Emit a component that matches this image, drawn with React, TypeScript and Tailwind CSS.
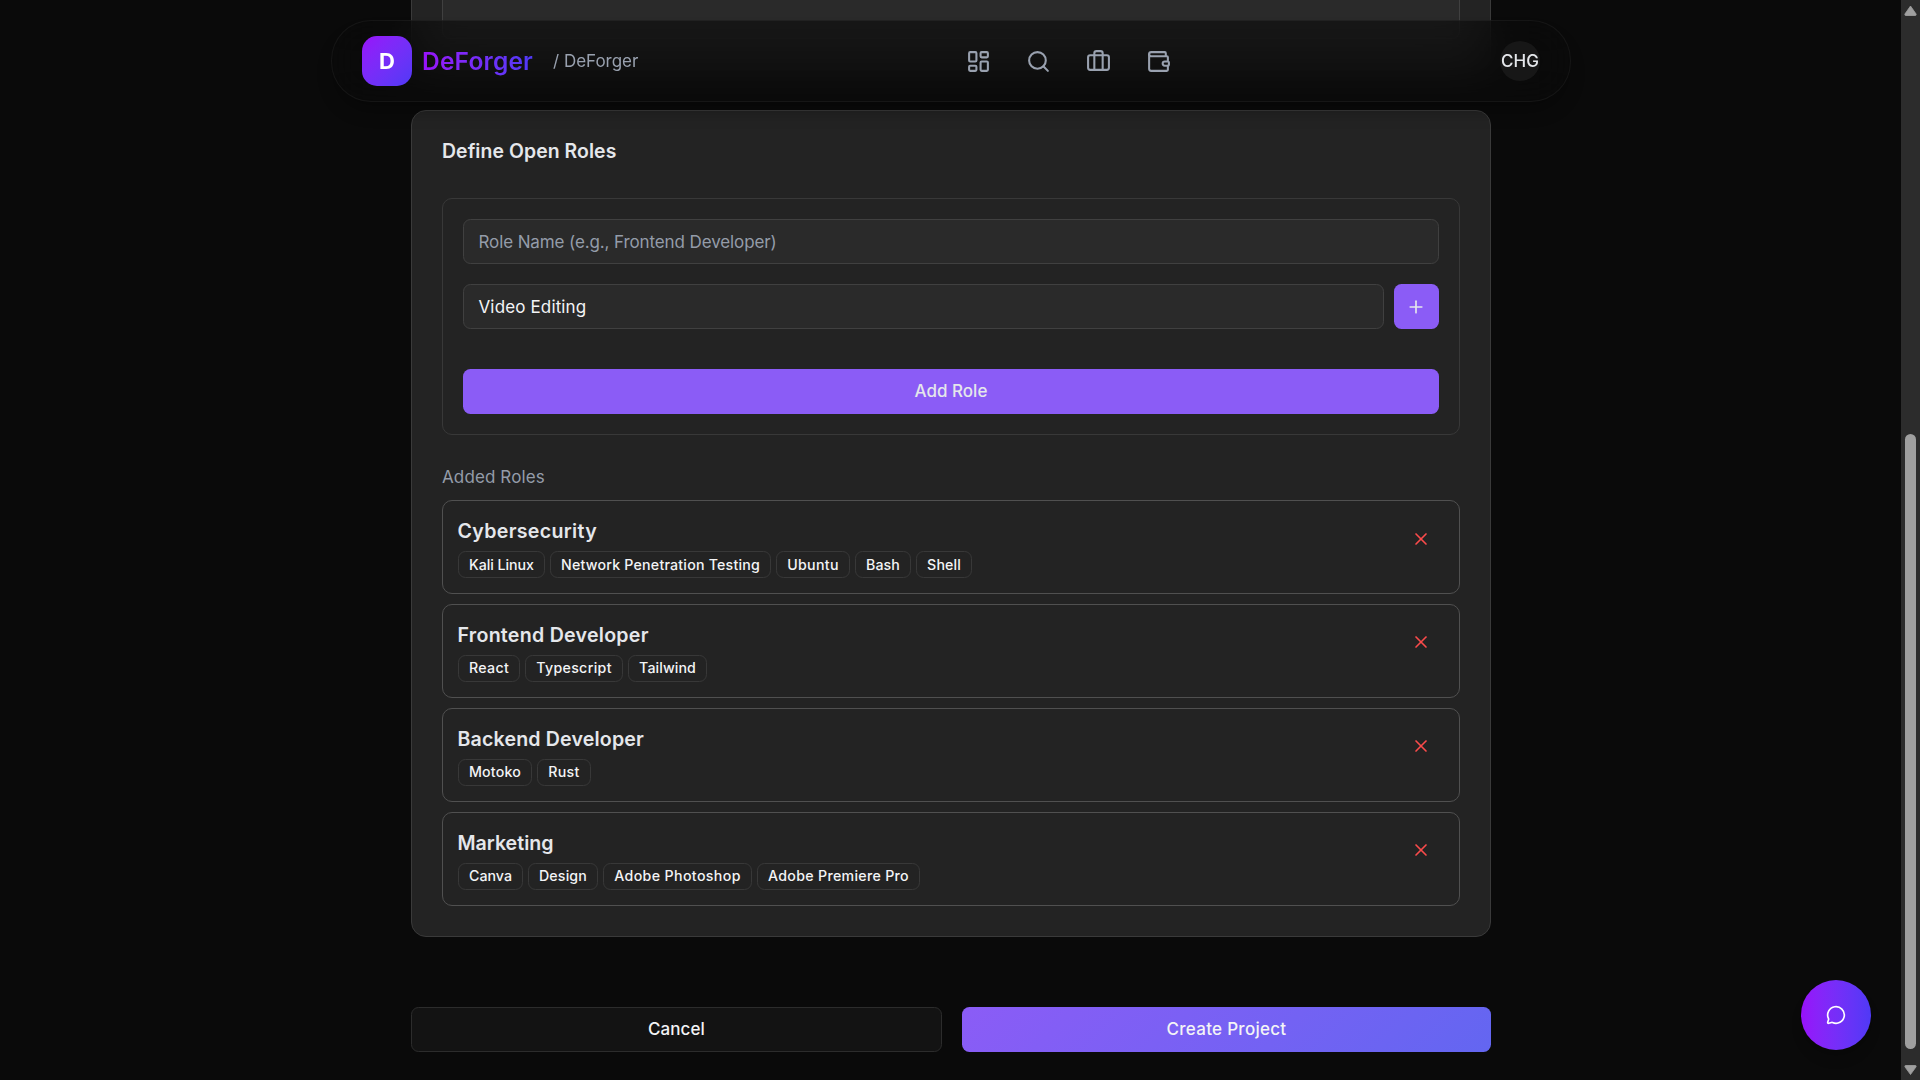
import { Briefcase, LayoutDashboard, MessageCircle, Plus, Search, Wallet, X } from "lucide-react";

type Tag = { label: string; box: string };
type Role = { name: string; tracking: string; nudge: string; tags: Tag[] };

const roles: Role[] = [
  {
    name: "Cybersecurity",
    tracking: "tracking-[0.32px]",
    nudge: "mt-[28px]",
    tags: [
      { label: "Kali Linux", box: "w-[87px] tracking-[-0.05px] pb-0" },
      { label: "Network Penetration Testing", box: "w-[221px] tracking-[0.21px] pb-0" },
      { label: "Ubuntu", box: "w-[74px] tracking-[0.3px] pb-0" },
      { label: "Bash", box: "w-[56px] tracking-[0.12px] pb-0" },
      { label: "Shell", box: "w-[56px] tracking-[0.12px] pb-0" },
    ],
  },
  {
    name: "Frontend Developer",
    tracking: "tracking-[0.26px]",
    nudge: "mt-[27px]",
    tags: [
      { label: "React", box: "w-[62px] tracking-[0.29px] pb-[2px]" },
      { label: "Typescript", box: "w-[98px] tracking-[0.33px] pb-[2px]" },
      { label: "Tailwind", box: "w-[79px] tracking-[0.1px] pb-[2px]" },
    ],
  },
  {
    name: "Backend Developer",
    tracking: "tracking-[0.16px]",
    nudge: "mt-[27px]",
    tags: [
      { label: "Motoko", box: "w-[74px] tracking-[0.18px] pb-[2px]" },
      { label: "Rust", box: "w-[54px] tracking-[0.3px] pb-[2px]" },
    ],
  },
  {
    name: "Marketing",
    tracking: "tracking-[0px]",
    nudge: "mt-[27px]",
    tags: [
      { label: "Canva", box: "w-[65px] tracking-[0.05px] pb-[2px]" },
      { label: "Design", box: "w-[70px] tracking-[0.15px] pb-[2px]" },
      { label: "Adobe Photoshop", box: "w-[149px] tracking-[0.36px] pb-[2px]" },
      { label: "Adobe Premiere Pro", box: "w-[163px] tracking-[0.3px] pb-[2px]" },
    ],
  },
];

function Header() {
  return (
    <header className="absolute left-[331px] top-[20px] z-10 flex h-[82px] w-[1240px] items-center justify-between rounded-[40px] border border-white/5 bg-[#0a0a0a]/60 px-[30px] shadow-[0_12px_18px_-4px_rgba(0,0,0,0.3)] backdrop-blur-[20px]">
      <div className="flex w-[274px] items-center whitespace-nowrap">
        <div className="flex size-[50px] shrink-0 items-center justify-center rounded-[15px] bg-linear-to-br from-[#9810fa] to-[#4f39f6] text-[22px] font-bold text-white">
          D
        </div>
        <span className="ml-[10px] bg-linear-to-r from-[#9810fa] to-[#4f39f6] bg-clip-text pt-px text-[24.5px] font-semibold tracking-[0.2px] text-transparent">
          DeForger
        </span>
        <span className="ml-[20px] pt-[2px] text-[17px] tracking-[-0.02px] text-[#99a1af]">/ DeForger</span>
      </div>
      <nav className="flex items-center gap-[35px] text-[#99a1af]">
        <LayoutDashboard size={25} />
        <Search size={25} />
        <Briefcase size={25} />
        <Wallet size={25} />
      </nav>
      <div className="flex size-[40px] items-center justify-center rounded-full bg-[#171717] pt-[2px] text-[17px] font-medium text-gray-200">
        CHG
      </div>
    </header>
  );
}

function RoleRow({ role }: { role: Role }) {
  return (
    <div className="flex h-[94px] items-start justify-between rounded-[10px] border border-[#505050] pl-[15px] pr-[28px]">
      <div className="flex flex-col pt-[15px]">
        <h4 className={`-ml-[0.5px] h-[30px] text-[19.6px] font-semibold leading-[30px] text-gray-200 ${role.tracking}`}>{role.name}</h4>
        <div className="mt-[5px] flex gap-[5px]">
          {role.tags.map((tag) => (
            <span
              key={tag.label}
              className={`flex h-[27px] items-center justify-center whitespace-nowrap rounded-[7.5px] border border-[#383838] text-[14.2px] font-medium text-gray-100 ${tag.box}`}
            >
              {tag.label}
            </span>
          ))}
        </div>
      </div>
      <X size={20} strokeWidth={2} className={`text-[#fb4b4b] ${role.nudge}`} />
    </div>
  );
}

function Scrollbar() {
  return (
    <div className="flex w-[19px] flex-col items-center bg-[#2c2c2c]">
      <svg className="mt-[5px] h-[11px] w-[13px]" viewBox="0 0 13 11" fill="#9f9f9f">
        <path d="M6.5 1 L0.9 9 Q0.6 10.5 1.6 10.5 H11.4 Q12.4 10.5 12.1 9 Z" stroke="#9f9f9f" strokeLinejoin="round" strokeWidth="0.8" />
      </svg>
      <div className="mt-[418px] h-[615px] w-[11px] rounded-full bg-[#9f9f9f]" />
      <svg className="mt-[16px] h-[11px] w-[13px]" viewBox="0 0 13 11" fill="#9f9f9f">
        <path d="M6.5 9.5 L0.9 1.8 Q0.6 0.5 1.6 0.5 H11.4 Q12.4 0.5 12.1 1.8 Z" stroke="#9f9f9f" strokeLinejoin="round" strokeWidth="0.8" />
      </svg>
    </div>
  );
}

export default function App() {
  return (
    <div className="flex h-[1080px] w-full overflow-hidden bg-[#0a0a0a] font-['Inter',sans-serif]">
      <div className="relative flex-1">
        <Header />
        <main className="ml-[411px] flex w-[1080px] flex-col">
          <section className="h-[70px] rounded-b-[15px] border border-t-0 border-[#3a3a3a] bg-[#232323] px-[30px]">
            <div className="h-[39px] rounded-b-[8px] border border-t-0 border-[#404040] bg-[#2a2a2a]" />
          </section>

          <section className="mt-[40px] flex h-[827px] flex-col rounded-[15px] border border-[#3a3a3a] bg-[#232323] px-[30px]">
            <h3 className="mt-[25px] h-[30px] text-[19.4px] font-semibold leading-[30px] tracking-[0.08px] text-gray-200">
              Define Open Roles
            </h3>
            <div className="mt-[32px] flex h-[237px] flex-col rounded-[10px] border border-[#383838] px-[20px] pt-[20px]">
              <div className="flex h-[45px] items-center rounded-[7.5px] border border-[#404040] bg-[#2a2a2a] px-[14.5px] pt-[2px] text-[17px] tracking-[-0.11px] text-[#949ca9]">
                Role Name (e.g., Frontend Developer)
              </div>
              <div className="mt-[20px] flex gap-[10px]">
                <div className="flex h-[45px] flex-1 items-center rounded-[7.5px] border border-[#404040] bg-[#2a2a2a] px-[14.5px] pt-[2px] text-[17px] tracking-[0.14px] text-gray-100">
                  Video Editing
                </div>
                <button className="flex size-[45px] items-center justify-center rounded-[7.5px] bg-[#8b5cf6] pr-px text-gray-200">
                  <Plus size={20} />
                </button>
              </div>
              <button className="mt-[40px] flex h-[45px] items-center justify-center rounded-[7.5px] bg-[#8b5cf6] text-[17px] font-medium text-gray-200">
                Add Role
              </button>
            </div>
            <p className="mt-[30px] h-[25px] text-[17px] leading-[25px] tracking-[0.12px] text-[#949ca9]">Added Roles</p>
            <div className="mt-[10px] flex flex-col gap-[10px]">
              {roles.map((role) => (
                <RoleRow key={role.name} role={role} />
              ))}
            </div>
          </section>

          <div className="mt-[70px] flex gap-[20px]">
            <button className="flex h-[45px] w-[531px] items-center justify-center rounded-[7.5px] border border-[#2c2c2c] bg-[#131313] text-[17px] font-medium tracking-[0.08px] text-gray-100">
              Cancel
            </button>
            <button className="flex h-[45px] flex-1 items-center justify-center rounded-[7.5px] bg-[linear-gradient(135deg,#8b5cf6,#6366f1)] text-[17px] font-medium tracking-[0.28px] text-gray-100">
              Create Project
            </button>
          </div>
        </main>

        <button className="absolute left-[1801px] top-[980px] flex size-[70px] items-center justify-center rounded-full bg-linear-to-r from-[#9810fa] to-[#4f39f6] text-white shadow-lg">
          <MessageCircle size={20} />
        </button>
      </div>
      <Scrollbar />
    </div>
  );
}
